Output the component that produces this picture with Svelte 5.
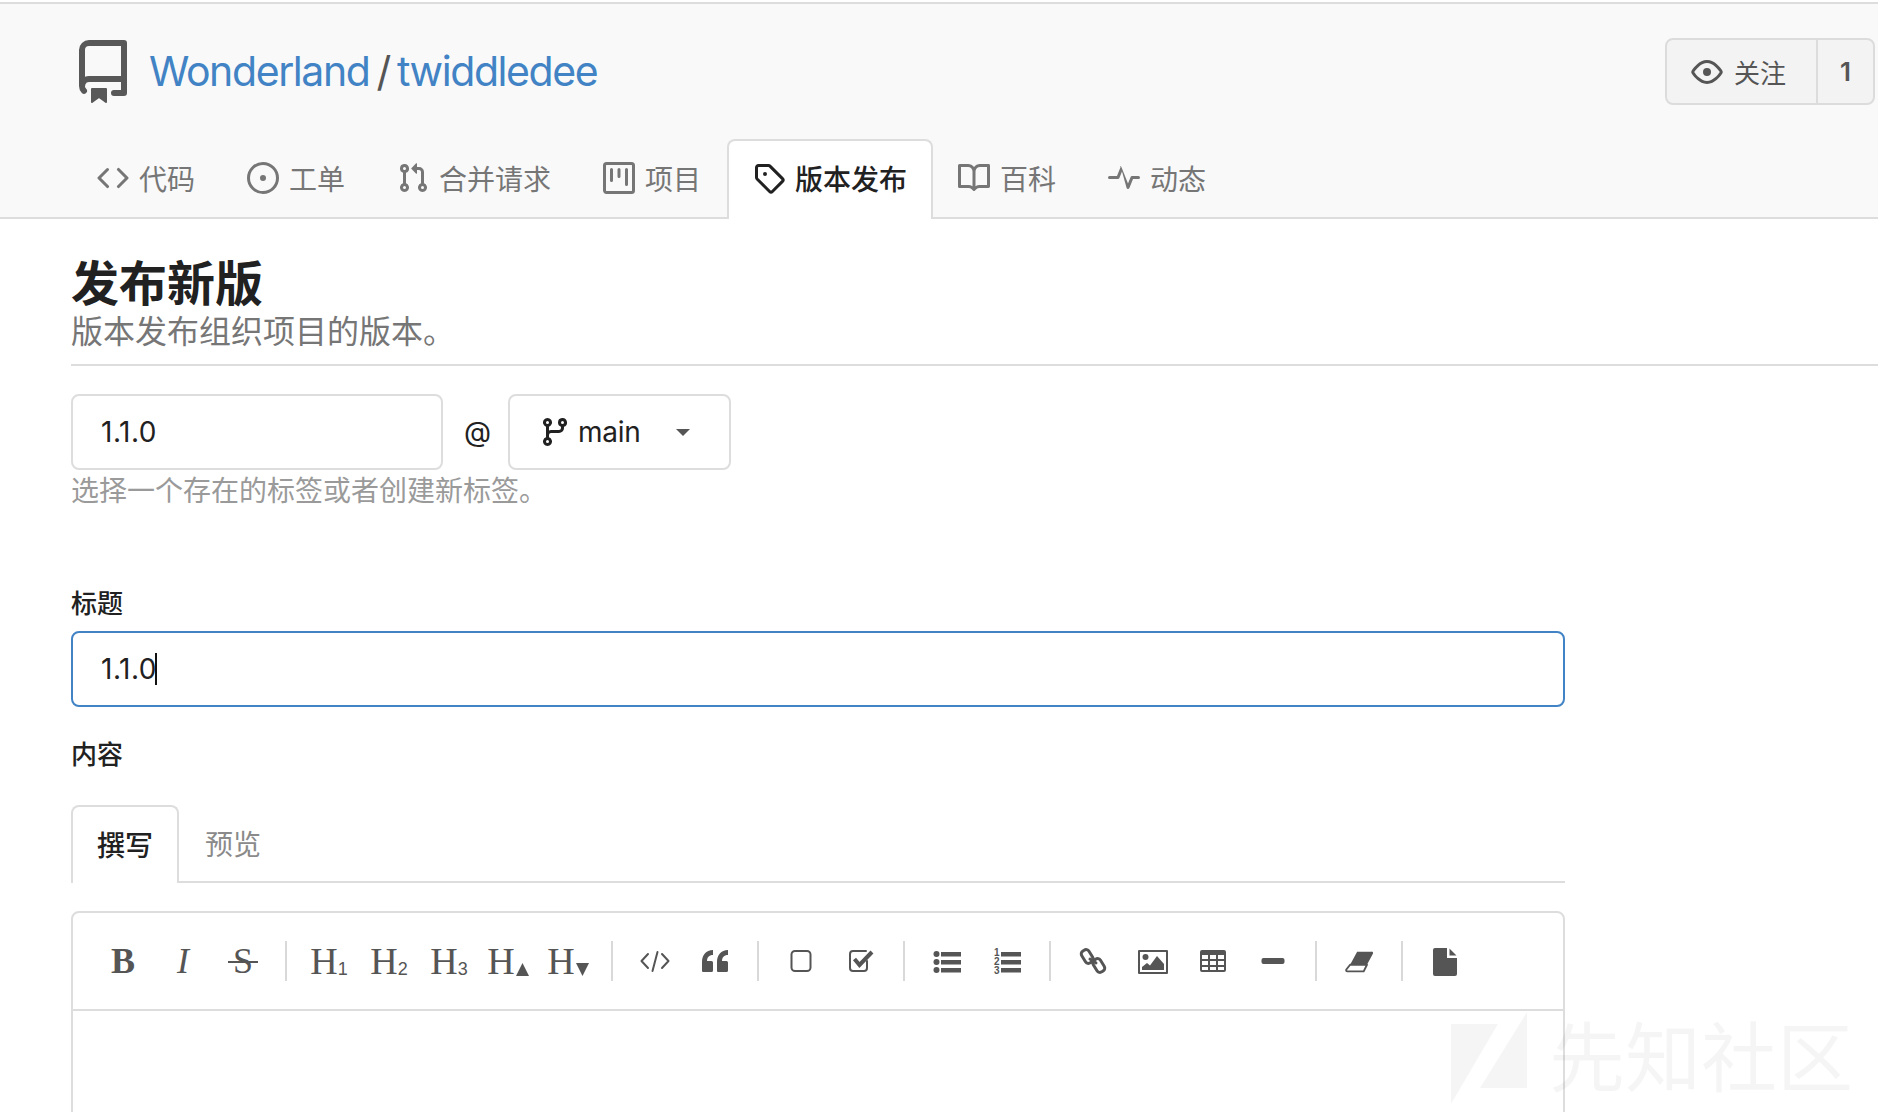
<script>
  const tabs = [
    { label: '代码', d: 'M4.72 3.22a.75.75 0 011.06 1.06L2.06 8l3.72 3.72a.75.75 0 11-1.06 1.06L.47 8.53a.75.75 0 010-1.06l4.25-4.25zm6.56 0a.75.75 0 10-1.06 1.06L13.94 8l-3.72 3.72a.75.75 0 101.06 1.06l4.25-4.25a.75.75 0 000-1.06l-4.25-4.25z' },
    { label: '工单', d: 'M8 1.5a6.5 6.5 0 100 13 6.5 6.5 0 000-13zM0 8a8 8 0 1116 0A8 8 0 010 8zm8 1.5a1.5 1.5 0 100-3 1.5 1.5 0 000 3z' },
    { label: '合并请求', d: 'M7.177 3.073L9.573.677A.25.25 0 0110 .854v4.792a.25.25 0 01-.427.177L7.177 3.427a.25.25 0 010-.354zM3.75 2.5a.75.75 0 100 1.5.75.75 0 000-1.5zm-2.25.75a2.25 2.25 0 113 2.122v5.256a2.251 2.251 0 11-1.5 0V5.372A2.25 2.25 0 011.5 3.25zM11 2.5h-1V4h1a1 1 0 011 1v5.628a2.251 2.251 0 101.5 0V5A2.5 2.5 0 0011 2.5zm1 10.25a.75.75 0 111.5 0 .75.75 0 01-1.5 0zM3.75 12a.75.75 0 100 1.5.75.75 0 000-1.5z' },
    { label: '项目', d: 'M1.75 0A1.75 1.75 0 000 1.75v12.5C0 15.216.784 16 1.75 16h12.5A1.75 1.75 0 0016 14.25V1.75A1.75 1.75 0 0014.25 0H1.75zM1.5 1.75a.25.25 0 01.25-.25h12.5a.25.25 0 01.25.25v12.5a.25.25 0 01-.25.25H1.75a.25.25 0 01-.25-.25V1.75zM11.75 3a.75.75 0 00-.75.75v7.5a.75.75 0 001.5 0v-7.5a.75.75 0 00-.75-.75zm-8.25.75a.75.75 0 011.5 0v5.5a.75.75 0 01-1.5 0v-5.5zM8 3a.75.75 0 00-.75.75v3.5a.75.75 0 001.5 0v-3.5A.75.75 0 008 3z' },
    { label: '版本发布', active: true, d: 'M2.5 7.775V2.75a.25.25 0 01.25-.25h5.025a.25.25 0 01.177.073l6.25 6.25a.25.25 0 010 .354l-5.025 5.025a.25.25 0 01-.354 0l-6.25-6.25a.25.25 0 01-.073-.177zm-1.5 0V2.75C1 1.784 1.784 1 2.75 1h5.025c.464 0 .91.184 1.238.513l6.25 6.25a1.75 1.75 0 010 2.474l-5.026 5.026a1.75 1.75 0 01-2.474 0l-6.25-6.25A1.75 1.75 0 011 7.775zM6 5a1 1 0 100 2 1 1 0 000-2z' },
    { label: '百科', d: 'M0 1.75A.75.75 0 01.75 1h4.253c1.227 0 2.317.59 3 1.501A3.744 3.744 0 0111.006 1h4.245a.75.75 0 01.75.75v10.5a.75.75 0 01-.75.75h-4.507a2.25 2.25 0 00-1.591.659l-.622.621a.75.75 0 01-1.06 0l-.622-.621A2.25 2.25 0 005.258 13H.75a.75.75 0 01-.75-.75V1.75zm8.755 3a2.25 2.25 0 012.25-2.25H14.5v9h-3.757c-.71 0-1.4.201-1.992.572l.004-7.322zm-1.504 7.324l.004-5.073-.002-2.253A2.25 2.25 0 005.003 2.5H1.5v9h3.757a3.75 3.75 0 011.994.574z' },
    { label: '动态', d: 'M6 2a.75.75 0 01.696.471L10 10.731l1.304-3.26A.75.75 0 0112 7h3.25a.75.75 0 010 1.5h-2.742l-1.812 4.528a.75.75 0 01-1.392 0L7 4.77 5.696 8.03A.75.75 0 015 8.5H.75a.75.75 0 010-1.5h3.742l1.812-4.529A.75.75 0 016 2z' }
  ];
  const heads = [
    { sub: '1' }, { sub: '2' }, { sub: '3' }, { tri: 'up' }, { tri: 'down' }
  ];
</script>

<div class="page">
  <header class="repo-head">
    <div class="repo-row">
      <div class="repo-title">
        <svg class="repo-icon" viewBox="0 0 16 16" aria-hidden="true"><path fill-rule="evenodd" d="M2 2.5A2.5 2.5 0 014.5 0h8.75a.75.75 0 01.75.75v12.5a.75.75 0 01-.75.75h-2.5a.75.75 0 110-1.5h1.75v-2h-8a1 1 0 00-.714 1.7.75.75 0 01-1.072 1.05A2.496 2.496 0 012 11.5v-9zm10.5-1V9h-8c-.356 0-.694.074-1 .208V2.5a1 1 0 011-1h8zM5 12.25v3.25a.25.25 0 00.4.2l1.45-1.087a.25.25 0 01.3 0L8.6 15.7a.25.25 0 00.4-.2v-3.25a.25.25 0 00-.25-.25h-3.5a.25.25 0 00-.25.25z"/></svg>
        <span class="repo-name"><a href="#owner">Wonderland</a><span class="slash">/</span><a href="#repo">twiddledee</a></span>
      </div>
      <div class="watch">
        <div class="watch-btn">
          <svg class="eye" viewBox="0 0 16 16" aria-hidden="true"><path fill-rule="evenodd" d="M1.679 7.932c.412-.621 1.242-1.75 2.366-2.717C5.175 4.242 6.527 3.5 8 3.5c1.473 0 2.824.742 3.955 1.715 1.124.967 1.954 2.096 2.366 2.717a.119.119 0 010 .136c-.412.621-1.242 1.75-2.366 2.717C10.825 11.758 9.473 12.5 8 12.5c-1.473 0-2.824-.742-3.955-1.715C2.92 9.818 2.09 8.69 1.679 8.068a.119.119 0 010-.136zM8 2c-1.981 0-3.67.992-4.933 2.078C1.797 5.169.88 6.423.43 7.1a1.619 1.619 0 000 1.798c.45.678 1.367 1.932 2.637 3.024C4.329 13.008 6.019 14 8 14c1.981 0 3.67-.992 4.933-2.078 1.27-1.091 2.187-2.345 2.637-3.023a1.619 1.619 0 000-1.798c-.45-.678-1.367-1.932-2.637-3.023C11.671 2.992 9.981 2 8 2zm0 8a2 2 0 100-4 2 2 0 000 4z"/></svg>
          <span>关注</span>
        </div>
        <div class="watch-count">1</div>
      </div>
    </div>
    <nav class="tabs">
      {#each tabs as t}
        <a class="tab" class:active={t.active} href="#tab">
          <svg class="tab-icon" viewBox="0 0 16 16" aria-hidden="true"><path fill-rule="evenodd" d={t.d}/></svg>
          <span>{t.label}</span>
        </a>
      {/each}
    </nav>
  </header>

  <main class="content">
    <div class="page-head">
      <h1>发布新版</h1>
      <p>版本发布组织项目的版本。</p>
    </div>

    <div class="tag-row">
      <input class="field tag-input" value="1.1.0" readonly />
      <span class="at">@</span>
      <div class="field branch">
        <svg class="branch-icon" viewBox="0 0 16 16" aria-hidden="true"><path fill-rule="evenodd" d="M11.75 2.5a.75.75 0 100 1.5.75.75 0 000-1.5zm-2.25.75a2.25 2.25 0 113 2.122V6A2.5 2.5 0 0110 8.5H6a1 1 0 00-1 1v1.128a2.251 2.251 0 11-1.5 0V5.372a2.25 2.25 0 111.5 0v1.836A2.492 2.492 0 016 7h4a1 1 0 001-1v-.628A2.25 2.25 0 019.5 3.25zM4.25 12a.75.75 0 100 1.5.75.75 0 000-1.5zM3.5 3.25a.75.75 0 111.5 0 .75.75 0 01-1.5 0z"/></svg>
        <span class="branch-name">main</span>
        <i class="caret-down"></i>
      </div>
    </div>
    <p class="hint">选择一个存在的标签或者创建新标签。</p>

    <div class="form">
      <div class="label title-label">标题</div>
      <div class="field title-input" role="textbox" tabindex="-1">1.1.0<i class="text-caret"></i></div>

      <div class="label body-label">内容</div>
      <div class="edit-tabs">
        <div class="edit-tab on">撰写</div>
        <div class="edit-tab">预览</div>
      </div>

      <div class="editor">
        <div class="toolbar">
          <span class="btn serif bold">B</span>
          <span class="btn serif ital">I</span>
          <span class="btn serif strike"><span>S</span></span>
          <i class="sep"></i>
          {#each heads as h}
            <span class="btn serif hd">H{#if h.sub}<sub>{h.sub}</sub>{:else}<svg class="tri" viewBox="0 0 12 12" aria-hidden="true"><path d={h.tri === 'up' ? 'M6 0l6 12H0z' : 'M0 0h12L6 12z'}/></svg>{/if}</span>
          {/each}
          <i class="sep"></i>
          <span class="btn"><svg viewBox="0 0 30 30" aria-hidden="true"><path class="ln" d="M8 8l-6.500 7L8 22M22 8l6.500 7L22 22M17.500 6l-5 19"/></svg></span>
          <span class="btn"><svg viewBox="0 0 30 30" aria-hidden="true"><path d="M3 26h8.500a1.500 1.500 0 001.500-1.500v-8a1.500 1.500 0 00-1.500-1.500H7c0-3.500 2-6 6-6V4C6 4 2 9 2 16v9a1 1 0 001 1zM18 26h8.500a1.500 1.500 0 001.500-1.500v-8a1.500 1.500 0 00-1.500-1.500H22c0-3.500 2-6 6-6V4c-7 0-11 5-11 12v9a1 1 0 001 1z"/></svg></span>
          <i class="sep"></i>
          <span class="btn"><svg viewBox="0 0 30 30" aria-hidden="true"><rect class="ln" x="5.500" y="5" width="19" height="20" rx="3.500"/></svg></span>
          <span class="btn"><svg viewBox="0 0 30 30" aria-hidden="true"><path class="ln" d="M21 15v7a3 3 0 01-3 3H7a3 3 0 01-3-3V8a3 3 0 013-3h13"/><path class="ln thick" d="M8.500 13l5 6L26 6"/></svg></span>
          <i class="sep"></i>
          <span class="btn"><svg viewBox="0 0 30 30" aria-hidden="true"><circle cx="4.500" cy="8" r="3"/><circle cx="4.500" cy="16" r="3"/><circle cx="4.500" cy="24" r="3"/><rect x="9" y="6" width="20" height="4.500"/><rect x="9" y="14" width="20" height="4.500"/><rect x="9" y="22" width="20" height="4.500"/></svg></span>
          <span class="btn"><svg viewBox="0 0 30 30" aria-hidden="true"><text class="num" x="2" y="10">1</text><text class="num" x="2" y="19">2</text><text class="num" x="2" y="28">3</text><rect x="9" y="6" width="20" height="4.500"/><rect x="9" y="14" width="20" height="4.500"/><rect x="9" y="22" width="20" height="4.500"/></svg></span>
          <i class="sep"></i>
          <span class="btn"><svg viewBox="0 0 30 30" aria-hidden="true"><rect class="ln mid" x="5" y="3.500" width="8.500" height="14" rx="3.500" transform="rotate(-32 9.250 10.500)"/><rect class="ln mid" x="16.500" y="12.500" width="8.500" height="14" rx="3.500" transform="rotate(-32 20.750 19.500)"/><path class="ln mid" d="M12 13l6 4"/></svg></span>
          <span class="btn"><svg viewBox="0 0 30 30" aria-hidden="true"><rect class="ln" x="1" y="5" width="28" height="22"/><circle cx="7.500" cy="11" r="3"/><path d="M4 24v-3l5-4 3 2.500L19 10l7 8v6z"/></svg></span>
          <span class="btn"><svg viewBox="0 0 30 30" aria-hidden="true"><path fill-rule="evenodd" d="M4 4h22a2 2 0 012 2v18a2 2 0 01-2 2H4a2 2 0 01-2-2V6a2 2 0 012-2zM4 9v4h6V9zm8 0v4h6V9zm8 0v4h6V9zM4 15v4h6v-4zm8 0v4h6v-4zm8 0v4h6v-4zM4 21v3h6v-3zm8 0v3h6v-3zm8 0v3h6v-3z"/></svg></span>
          <span class="btn"><svg viewBox="0 0 30 30" aria-hidden="true"><rect x="3.500" y="12" width="23" height="6" rx="2"/></svg></span>
          <i class="sep"></i>
          <span class="btn"><svg viewBox="0 0 32 30" aria-hidden="true"><path d="M14 5h15.500a1.500 1.500 0 011.300 2.300L24.500 19H6.500z"/><path class="ln" d="M6.500 19h18l-3.500 7H3.500a1.200 1.200 0 01-1-1.900z"/></svg></span>
          <i class="sep"></i>
          <span class="btn"><svg viewBox="0 0 30 30" aria-hidden="true"><path d="M5 2h12v10h10v16a2 2 0 01-2 2H5a2 2 0 01-2-2V4a2 2 0 012-2zM19.500 2.500l7 7h-7z"/></svg></span>
        </div>
        <div class="editor-body"></div>
      </div>
    </div>
  </main>

  <div class="watermark" aria-hidden="true">
    <svg viewBox="0 0 80 92"><path d="M0 12h47L0 92zM76 0v76H29z"/></svg>
    <span>先知社区</span>
  </div>
</div>

<style>
  :global(body) {
    margin: 0;
    background: #fff;
    overflow: hidden;
  }
  .page {
    position: relative;
    height: 1112px;
    overflow: hidden;
    font-family: Inter, "Noto Sans CJK SC", sans-serif;
    color: #212121;
    padding-top: 2px;
    box-sizing: border-box;
  }
  a { text-decoration: none; color: inherit; }
  svg { display: block; fill: currentColor; }

  .repo-head {
    background: #f9f9f9;
    border-top: 2px solid #ddd;
    border-bottom: 2px solid #ddd;
    height: 213px;
    box-sizing: content-box;
    display: flex;
    flex-direction: column;
    justify-content: space-between;
  }
  .repo-row {
    display: flex;
    justify-content: space-between;
    align-items: flex-start;
    padding: 34px 3px 0 71px;
  }
  .repo-title { display: flex; align-items: center; gap: 14px; height: 68px; }
  .repo-icon { width: 64px; height: 64px; color: #585858; }
  .repo-name { font-size: 41px; color: #4183c4; letter-spacing: -1.4px; white-space: nowrap; margin-top: -2px; }
  .slash { color: #555; margin: 0 7px; }

  .watch {
    display: flex;
    height: 67px;
    box-sizing: border-box;
    border: 2px solid #dcdcdc;
    border-radius: 8px;
    background: #f3f3f3;
    color: #555;
    font-size: 26px;
  }
  .watch-btn { display: flex; align-items: center; gap: 11px; padding: 0 30px 0 24px; border-right: 2px solid #dcdcdc; }
  .eye { width: 32px; height: 32px; }
  .watch-count { display: flex; align-items: center; padding: 0 22px; font-weight: 600; font-size: 26px; }

  .tabs { display: flex; padding-left: 71px; height: 78px; align-items: flex-end; }
  .tab {
    display: flex;
    align-items: center;
    gap: 10px;
    height: 80px;
    padding: 0 24px 4px;
    box-sizing: border-box;
    color: #767676;
    font-size: 28px;
    white-space: nowrap;
    margin-bottom: -2px;
    border: 2px solid transparent;
    border-bottom: 0;
  }
  .tab-icon { width: 32px; height: 32px; }
  .tab.active {
    background: #fff;
    color: #212121;
    font-weight: 500;
    border-color: #ddd;
    border-radius: 8px 8px 0 0;
    margin-right: -1px;
  }

  .content { padding: 0 0 0 71px; }
  .page-head { border-bottom: 2px solid #ddd; padding-top: 36px; height: 109px; box-sizing: content-box; }
  h1 { margin: 0; font-size: 48px; line-height: 58px; font-weight: 700; color: #212121; }
  .page-head p { margin: 1px 0 0; font-size: 32px; line-height: 36px; color: #767676; }

  .field {
    box-sizing: border-box;
    border: 2px solid #ddd;
    border-radius: 8px;
    background: #fff;
    font: inherit;
    font-size: 28px;
    color: #212121;
  }
  .tag-row { display: flex; align-items: center; margin-top: 28px; height: 76px; }
  .tag-input { width: 372px; height: 76px; padding: 0 28px; outline: none; letter-spacing: 0.5px; }
  .at { width: 65px; padding-left: 4px; box-sizing: border-box; text-align: center; font-size: 28px; color: #212121; }
  .branch { width: 223px; height: 76px; display: flex; align-items: center; padding-left: 29px; }
  .branch-icon { width: 32px; height: 32px; margin-right: 7px; }
  .branch-name { letter-spacing: -0.3px; }
  .caret-down {
    margin-left: 36px;
    width: 0; height: 0;
    border: 7px solid transparent;
    border-top: 7px solid #555;
    border-bottom: 0;
  }
  .hint { margin: 1px 0 0; font-size: 28px; line-height: 40px; color: #9a9a9a; }

  .form { width: 1494px; }
  .label { font-size: 26px; line-height: 32px; font-weight: 500; color: #212121; }
  .title-label { margin-top: 77px; margin-bottom: 11px; }
  .title-input {
    height: 76px;
    display: flex;
    align-items: center;
    padding: 0 28px;
    border-color: #4183c4;
    letter-spacing: 0.5px;
  }
  .text-caret { display: block; width: 2px; height: 32px; background: #111; margin-left: -2px; }
  .body-label { margin-top: 32px; }
  .edit-tabs { display: flex; margin-top: 34px; height: 76px; border-bottom: 2px solid #ddd; }
  .edit-tab {
    display: flex;
    align-items: center;
    font-size: 28px;
    color: #8a8a8a;
    padding: 0 26px;
    height: 76px;
    box-sizing: border-box;
  }
  .edit-tab.on {
    width: 108px;
    padding: 0 0 2px;
    justify-content: center;
    color: #212121;
    font-weight: 500;
    border: 2px solid #ddd;
    border-bottom: 0;
    border-radius: 8px 8px 0 0;
    height: 78px;
    background: #fff;
  }

  .editor {
    margin-top: 28px;
    border: 2px solid #ddd;
    border-radius: 8px 8px 0 0;
    height: 400px;
  }
  .toolbar {
    display: flex;
    align-items: center;
    height: 96px;
    padding-left: 20px;
    border-bottom: 2px solid #ddd;
    color: #555;
  }
  .btn {
    width: 60px;
    height: 40px;
    flex: none;
    display: flex;
    align-items: center;
    justify-content: center;
    color: #555;
  }
  .btn svg { width: 30px; height: 30px; overflow: visible; }
  .serif { font-family: "Liberation Serif", serif; font-size: 36px; line-height: 40px; }
  .bold { font-weight: 700; }
  .ital { font-style: italic; }
  .strike span { position: relative; display: block; }
  .strike span::after {
    content: "";
    position: absolute;
    left: -5px; right: -5px;
    top: 20px;
    height: 2px;
    background: #555;
  }
  .hd { font-size: 38px; }
  .hd sub { font-family: "Liberation Sans", sans-serif; font-size: 18px; line-height: 0; position: relative; top: 8px; vertical-align: baseline; }
  .btn .tri { width: 13px; height: 13px; margin: 17px 2px 0 1px; }
  .sep { flex: none; width: 2px; height: 40px; background: #d9d9d9; margin: 0 12px; }
  .ln { fill: none; stroke: currentColor; stroke-width: 2; stroke-linecap: round; stroke-linejoin: round; }
  .mid { stroke-width: 3; }
  .thick { stroke-width: 4; stroke-linecap: butt; stroke-linejoin: miter; }
  .num { font-family: "Liberation Sans", sans-serif; font-weight: 700; font-size: 10px; }
  .watermark {
    position: absolute;
    left: 1451px;
    top: 1012px;
    display: flex;
    align-items: flex-start;
    color: rgba(0, 0, 0, 0.04);
    pointer-events: none;
  }
  .watermark svg { width: 80px; height: 92px; }
  .watermark span {
    font-size: 76px;
    line-height: 88px;
    font-weight: 400;
    margin: 2px 0 0 18px;
    white-space: nowrap;
  }
</style>
